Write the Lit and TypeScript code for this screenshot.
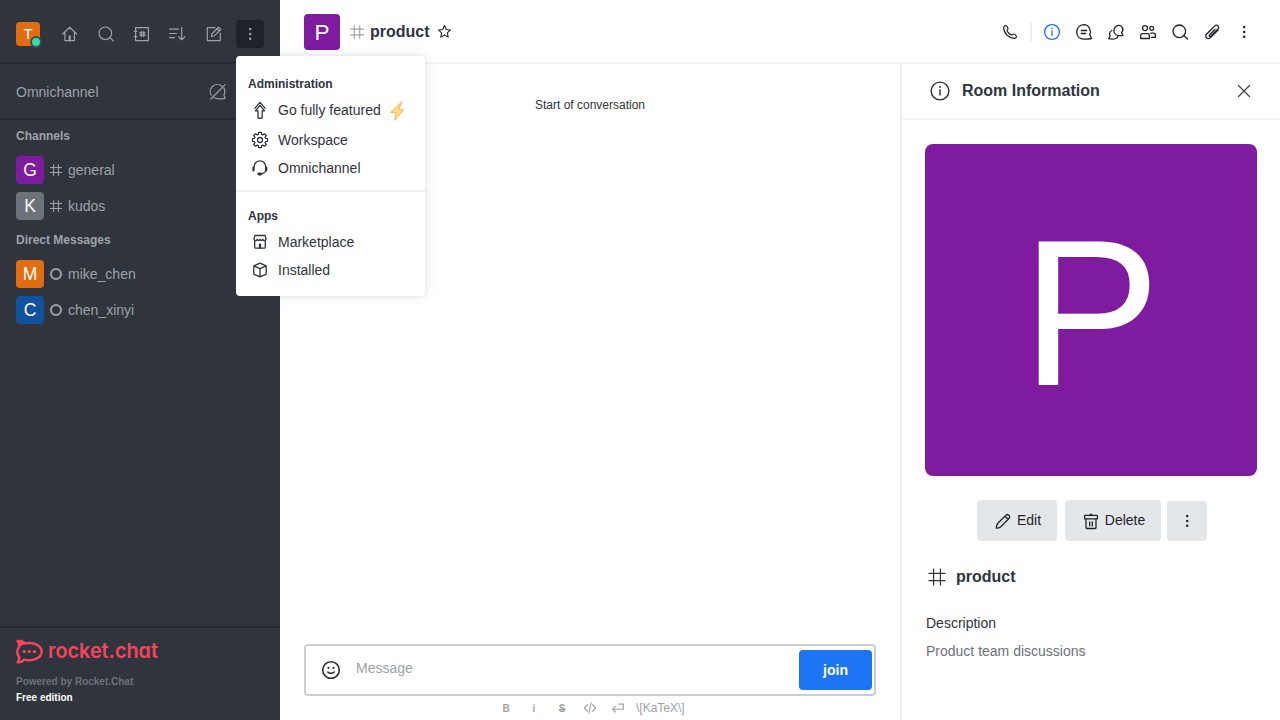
import { LitElement, html, css, svg, TemplateResult } from "lit";
import { customElement, property } from "lit/decorators.js";

const dots = svg`<g fill="currentColor" stroke="none"><circle cx="10.2" cy="5" r="1.25"/><circle cx="10.2" cy="9.900" r="1.25"/><circle cx="10.2" cy="14.800" r="1.25"/></g>`;

// Outline of a gear with eight teeth, centred in the 20x20 icon box.
const gearPath = () => {
  const pts: string[] = [];
  for (let i = 0; i < 8; i++) {
    for (const [deg, r] of [[-16, 5.8], [-11, 7.7], [11, 7.7], [16, 5.8]]) {
      const a = ((i * 45 + deg) * Math.PI) / 180;
      pts.push(`${(10 + r * Math.cos(a)).toFixed(2)} ${(10 + r * Math.sin(a)).toFixed(2)}`);
    }
  }
  return `M${pts.join("L")}Z`;
};

const icons: Record<string, TemplateResult> = {
  home: svg`<path d="M2.7 10 9.7 3.2l7 6.8M4.9 8.6v8h9.5v-8"/><path d="M9.7 16.400v-4" stroke-width="2.2"/>`,
  search: svg`<circle cx="9.3" cy="9.3" r="6.3"/><path d="m13.8 13.6 3.7 3.4"/>`,
  directory: svg`<path d="M3.600 3.600h12.800v13H3.600zM2.400 7.400h2.400M2.400 12.700h2.400M9.300 7.400v5.200M11.700 7.400v5.200M7.700 8.800h5.500M7.700 11.200h5.500"/>`,
  sort: svg`<path d="M1.600 5.200h9M1.600 9.500h7.100M1.600 13.700h5.100M13.700 3.300v12.400M10.500 12.700l3.200 3.100 3.200-3.100"/>`,
  edit: svg`<path d="M11 3.600H3.300v13h13V9.200M7.400 12.500l.5-2.800 6.600-6.400 2.300 2.200-6.600 6.400zM13 4.800l2.300 2.200"/>`,
  kebab: dots,
  omnioff: svg`<path d="M3.300 13.200A7.100 7.100 0 0 1 13.800 4M15.900 6.100c1.300 2.300 1.200 4.900 0 7.100l1.200 3.100c-3.500.6-8.200 1-11-.5M2.800 17 17.200 2.600"/>`,
  hash: svg`<path d="M6.600 2v16M13.400 2v16M2 6.400h16M2 13.600h16"/>`,
  star: svg`<path d="m10 3 2.100 4.600 4.900.6-3.600 3.400.9 5-4.300-2.500-4.300 2.500.9-5L3 8.200l4.900-.6z"/>`,
  phone: svg`<path d="M3.700 5.600C3.700 4.300 5 3.200 6 3.700c1 .5 1.900 1.900 2 2.900.1.900-1.200 1.100-1 2 .4 1.500 2.900 4 4.400 4.400.9.2 1.100-1.100 2-1 1 .1 2.500 1 2.900 2 .5 1-.6 2.300-1.800 2.300C8.900 16.300 3.700 11.300 3.700 5.600Z"/>`,
  info: svg`<circle cx="10" cy="10" r="7.400"/><path d="M10 9v4.400"/><circle cx="10" cy="6.600" r=".8" fill="currentColor" stroke="none"/>`,
  threads: svg`<path d="M15.800 12.800c1.600-3.200 0-10.100-6.200-10.100a7.100 7.100 0 0 0-6.900 7.200c0 4.600 3.200 7.100 7.200 7.300 2.600.1 5.300-.2 7.600-.7z"/><path d="M7.300 8.500h5.400M7.300 11.500h4.300"/>`,
  discussion: svg`<path d="M15.600 10.500l1.300 2.900c-1.700.3-4.800.5-6.900-.7-2.900-1.800-2.800-6.200-.2-8.300 2.100-1.700 5-1.300 6.400.9 1.100 1.700.8 3.700-.6 5.200Z"/><path d="M5.800 8.500c-2 1-2.900 3.400-1.600 5.500l-1.600 2.700c2.400.4 5.200.6 7.300-.2 1.200-.4 2-1.300 2.400-2.800"/>`,
  team: svg`<circle cx="7" cy="6.100" r="2.500"/><circle cx="13.700" cy="6.300" r="1.900"/><path d="M2.700 16.500v-3.200c0-1 .8-1.700 1.700-1.700h5.300c1 0 1.700.8 1.700 1.700v3.200zM12.800 11.200h2.500c1.200 0 2.200.9 2.200 2.100v2.100h-3.800"/>`,
  clip: svg`<path d="m12.900 7.500-5.200 5.200c-1.200 1.200.1 2.500 1.300 1.300l6.700-6.700c2.500-2.500-.8-5.600-3.200-3.200l-7.600 7.600c-3.100 3.100.9 6.600 3.800 3.700l7.400-7.300M10.900 5.800 5.800 11"/>`,
  close: svg`<path d="m4.400 4.400 11.200 11.200M15.600 4.400 4.400 15.600"/>`,
  upgrade: svg`<path d="M8 17v-6.200H5.400L10 5.400l4.600 5.400H12.200V17c0 1.900-4.200 1.900-4.200 0ZM5 8.200 10 2.400l5 5.800"/>`,
  gear: svg`<path d=${gearPath()}/><circle cx="10" cy="10" r="2.500"/>`,
  headset: svg`<path d="M4.200 9V8.200a5.700 5.300 0 0 1 11.400 0V9c1.300 3.500-.6 6.300-4 6.800"/><path d="M3.500 9.500v3M16.200 9.500v3" stroke-width="2.200"/><path d="M8.700 16h1.900" stroke-width="2.800"/>`,
  market: svg`<path d="M4.700 8.500v6.800q0 .9.900.9h8.800q.9 0 .9-.9V8.500M5.400 3.500h9.200q.7 0 .8.800l.6 2.500c0 2.200-2.500 2.200-3.300.6-.8 1.500-1.900 1.500-2.700 0-.8 1.500-1.900 1.500-2.700 0-.8 1.600-3.300 1.600-3.300-.6l.6-2.500q.1-.8.800-.8Z"/><path d="M10 16v-3.500" stroke-width="2.200"/>`,
  cube: svg`<path d="m10 3.200 6.200 2.600v8.300L10 16.900l-6.200-2.800V5.800zM3.800 5.900 10 8.600l6.200-2.700M10 8.600v8.300"/>`,
  smile: svg`<circle cx="10" cy="10" r="6.900"/><path d="M7.300 11.700c1.300 1.500 4.100 1.500 5.400 0"/><g fill="currentColor" stroke="none"><circle cx="7.900" cy="8.200" r=".95"/><circle cx="12.100" cy="8.200" r=".95"/></g>`,
  code: svg`<path d="M6.500 5.300 1.900 10l4.600 4.700M13.500 5.300l4.600 4.700-4.600 4.700M11.600 2.500 8.400 17.500"/>`,
  enter: svg`<path d="M11 4.500h6.700v7.200H2.600M6.500 7.700l-4.200 4 4.200 4"/>`,
  pencil: svg`<path d="M3.300 17.200c0-2.500.2-3.500 1.300-4.700l8.400-8.400c1.800-1.700 4.900 1.400 3.200 3.100l-8.400 8.500c-1.200 1.100-2.100 1.400-4.500 1.500ZM12 5.200l3.100 3.100"/>`,
  trash: svg`<path d="M4.200 4.400h11.600q.6 0 .6.600v2.800H3.600V5q0-.6.600-.6ZM5 7.800v8.700q0 1 1 1h8q1 0 1-1V7.800M8.700 11v3.900M11.300 11v3.900M9.300 3.300h1.400"/>`,
};

@customElement("rc-icon")
class RcIcon extends LitElement {
  static styles = css`
    :host { display: inline-flex; flex: none; }
    svg { display: block; fill: none; stroke: currentColor; stroke-linecap: round; stroke-linejoin: round; }
  `;
  @property() name = "";
  @property({ type: Number }) size = 20;
  @property({ type: Number }) weight = 1.2;
  render() {
    return html`<svg width=${this.size} height=${this.size} viewBox="0 0 20 20" stroke-width=${this.weight}>${icons[this.name]}</svg>`;
  }
}

@customElement("rc-avatar")
class RcAvatar extends LitElement {
  static styles = css`
    :host { display: block; flex: none; }
    svg { display: block; border-radius: 4px; }
    .large { border-radius: 8px; }
    text { font-family: "Liberation Sans", Arial, sans-serif; font-size: 125px; fill: #fff; text-anchor: middle; }
  `;
  @property() letter = "";
  @property() color = "";
  @property({ type: Number }) size = 28;
  render() {
    return html`<svg class=${this.size > 100 ? "large" : ""} width=${this.size} height=${this.size} viewBox="0 0 200 200">
      <rect width="200" height="200" fill=${this.color}></rect><text x="100" y="100" dy="0.36em">${this.letter}</text></svg>`;
  }
}

const channels = [["G", "#7f1b9f", "general"], ["K", "#6c727a", "kudos"]];
const directs = [["M", "#e26d0e", "mike_chen"], ["C", "#10529e", "chen_xinyi"]];

@customElement("app-root")
class AppRoot extends LitElement {
  static styles = css`
    :host { display: flex; position: relative; width: 1280px; height: 720px; overflow: hidden; background: #fff; color: #2f343d; font: 14px/20px "Liberation Sans", Arial, sans-serif; }
    * { box-sizing: border-box; }
    .side { width: 280px; flex: none; display: flex; flex-direction: column; background: #2f343d; color: #9ea2a8; }
    .tools { height: 64px; padding: 20px 16px 0; display: flex; gap: 8px; border-bottom: 2px solid #272b33; }
    .me { position: relative; width: 28px; margin-right: 4px; padding-top: 2px; }
    .presence { position: absolute; left: 14px; top: 16px; width: 12px; height: 12px; border-radius: 50%; background: #2de0a5; border: 2px solid #414852; }
    .tool { width: 28px; height: 28px; display: grid; place-items: center; border-radius: 4px; }
    .pressed { background: #1f2329; }
    .omni { height: 56px; padding: 2px 52px 0 16px; display: flex; align-items: center; justify-content: space-between; border-bottom: 2px solid #272b33; }
    .list { flex: 1; }
    .group { height: 32px; padding-left: 16px; font-size: 12px; font-weight: 700; line-height: 32px; }
    .room { height: 36px; padding-left: 16px; display: flex; align-items: center; }
    .mark { width: 24px; display: grid; place-items: center; }
    .ring { width: 12px; height: 12px; border: 2px solid #9ea2a8; border-radius: 50%; }
    .foot { height: 94px; border-top: 2px solid #272b33; padding: 5px 16px 0; font-size: 12px; line-height: 16px; font-weight: 700; }
    .brand { display: block; margin-bottom: 9px; }
    .brand text { font: 600 20.5px Inter, sans-serif; font-feature-settings: "cv11" 1; fill: #f5455c; }
    .dim { font-size: 10px; color: #6c727a; }
    .edition { font-size: 10px; color: #fff; }
    .page { flex: 1; min-width: 0; display: flex; flex-direction: column; }
    .head { height: 64px; padding: 2px 24px 0; border-bottom: 2px solid #f2f3f5; display: flex; align-items: center; }
    .title { font-size: 16px; line-height: 24px; font-weight: 700; }
    .hashy { margin: 0 5px 0 9px; color: #9ea2a8; }
    .fav { margin: -1px 0 0 6px; color: #1f2329; }
    .acts { margin-left: auto; display: flex; align-items: center; gap: 8px; color: #1f2329; }
    .act { width: 24px; display: grid; place-items: center; }
    .on { color: #1d74f5; }
    .rule { width: 2px; height: 20px; background: #eeeff1; }
    .body { flex: 1; display: flex; min-height: 0; }
    .chat { flex: 1; display: flex; flex-direction: column; padding: 0 24px; }
    .start { flex: 1; padding-top: 33px; text-align: center; font-size: 12px; line-height: 16px; }
    .composer { height: 52px; border: 2px solid #cbced1; border-radius: 4px; display: flex; align-items: center; padding: 0 2px 0 13px; }
    .hint { flex: 1; margin: 0 0 4px 13px; color: #9ea2a8; }
    .join { width: 73px; height: 40px; background: #1d74f5; color: #fff; border-radius: 4px; font-weight: 700; display: grid; place-items: center; }
    .format { height: 24px; display: flex; align-items: center; padding-left: 188px; color: #9ea2a8; font-size: 12px; }
    .cell { width: 28px; display: grid; place-items: center; }
    .glyph { font-size: 10px; font-weight: 700; padding-top: 2px; }
    .struck { text-decoration: line-through; }
    .katex { margin-left: 4px; }
    .panel { width: 380px; border-left: 2px solid #eeeff1; display: flex; flex-direction: column; }
    .phead { height: 56px; padding: 0 26px; border-bottom: 2px solid #f2f3f5; display: flex; align-items: center; }
    .ptitle { flex: 1; margin-left: 10px; }
    .pbody { padding: 24px 23px 0; }
    .buttons { display: flex; align-items: flex-end; padding: 24px 0 0 52px; }
    .btn { height: 41px; background: #e4e7ea; color: #1f2329; border-radius: 4px; display: flex; align-items: center; justify-content: center; gap: 4px; }
    .cap { padding-bottom: 1px; }
    .wide1 { width: 80px; margin-right: 8px; }
    .wide2 { width: 96px; margin-right: 6px; }
    .square { width: 40px; height: 40px; }
    .name { display: flex; align-items: center; gap: 9px; padding: 24px 0 0 2px; }
    .label { padding: 24px 0 0 1px; }
    .desc { padding: 8px 0 0 1px; color: #6c727a; }
    .menu { position: absolute; left: 236px; top: 56px; width: 189px; height: 240px; padding: 12px 0; border-radius: 4px; background: #fff; box-shadow: 0 0 2px rgba(47,52,61,.1), 0 0 12px rgba(47,52,61,.14); }
    .mtitle { padding: 8px 12px 4px; font-size: 12px; line-height: 16px; font-weight: 700; }
    .item { height: 28px; padding: 4px 14px; display: flex; gap: 8px; }
    .tall { height: 30px; }
    .sep { height: 2px; background: #eeeff1; margin: 8px 0; }
    .bolt { margin: -1px 0 0 -2px; }
  `;

  room(r: string[], direct: boolean) {
    return html`<div class="room"><rc-avatar .letter=${r[0]} .color=${r[1]} .size=${28}></rc-avatar>
      <span class="mark">${direct ? html`<span class="ring"></span>` : html`<rc-icon name="hash" size="14" weight="1.500"></rc-icon>`}</span><span>${r[2]}</span></div>`;
  }

  item(icon: string, label: string) {
    return html`<div class="item"><rc-icon .name=${icon} weight="1.300"></rc-icon><span>${label}</span></div>`;
  }

  render() {
    return html`
      <aside class="side">
        <div class="tools">
          <div class="me"><rc-avatar letter="T" color="#e26d0e" size="24"></rc-avatar><span class="presence"></span></div>
          ${["home", "search", "directory", "sort", "edit", "kebab"].map((n) => html`<div class="tool ${n === "kebab" ? "pressed" : ""}"><rc-icon .name=${n}></rc-icon></div>`)}
        </div>
        <div class="omni"><span>Omnichannel</span><rc-icon name="omnioff"></rc-icon></div>
        <div class="list">
          <div class="group">Channels</div>
          ${channels.map((r) => this.room(r, false))}
          <div class="group">Direct Messages</div>
          ${directs.map((r) => this.room(r, true))}
        </div>
        <div class="foot">
          <svg class="brand" width="150" height="32" viewBox="0 -6 150 32">
            <path fill="none" stroke="#f5455c" stroke-width="2.500" stroke-linejoin="round" d="M1.600 2.300C4.300 2 6.700 2.900 8.200 4.600 16 2.800 25.700 5.600 25.700 12.600S16 22.300 8.300 20.600C6.700 22.700 4.300 23.500 1.600 23.300 3 21.700 3.600 19.800 3.100 17.900.7 15.200.7 10.600 3.100 7.700 3.700 5.800 3.100 3.900 1.600 2.300Z"/>
            <path fill="#f5455c" d="M.2 1.100C5 .1 8.600 1.500 10.600 4.400 7 5.300 4.500 6.700 3 9.200 4 6 3 3.500.2 1.100Z"/>
            <g fill="#f5455c"><circle cx="8.200" cy="12.600" r="1.700"/><circle cx="13.300" cy="12.600" r="1.700"/><circle cx="18.500" cy="12.600" r="1.700"/></g>
            <text x="32" y="18.500" textLength="110" lengthAdjust="spacingAndGlyphs">rocket.chat</text>
          </svg>
          <div class="dim">Powered by Rocket.Chat</div>
          <div class="edition">Free edition</div>
        </div>
      </aside>
      <main class="page">
        <header class="head">
          <rc-avatar letter="P" color="#7f1b9f" size="36"></rc-avatar>
          <rc-icon class="hashy" name="hash" size="16" weight="1.400"></rc-icon>
          <span class="title">product</span>
          <rc-icon class="fav" name="star" size="17" weight="1.300"></rc-icon>
          <div class="acts">
            <span class="act"><rc-icon name="phone"></rc-icon></span><span class="rule"></span>
            ${["info", "threads", "discussion", "team", "search", "clip", "kebab"].map((n) => html`<span class="act ${n === "info" ? "on" : ""}"><rc-icon .name=${n} weight="1.300"></rc-icon></span>`)}
          </div>
        </header>
        <div class="body">
          <section class="chat">
            <div class="start">Start of conversation</div>
            <div class="composer"><rc-icon name="smile" size="24" weight="1.400"></rc-icon><span class="hint">Message</span><span class="join">join</span></div>
            <div class="format">
              <span class="cell glyph">B</span><span class="cell glyph">i</span><span class="cell glyph struck">S</span>
              <span class="cell"><rc-icon name="code" size="14" weight="1.600"></rc-icon></span>
              <span class="cell"><rc-icon name="enter" size="14" weight="1.600"></rc-icon></span>
              <span class="katex">\\[KaTeX\\]</span>
            </div>
          </section>
          <aside class="panel">
            <div class="phead"><rc-icon name="info" size="24" weight="1.200"></rc-icon><span class="title ptitle">Room Information</span><rc-icon name="close" weight="1.300"></rc-icon></div>
            <div class="pbody">
              <rc-avatar letter="P" color="#7f1b9f" size="332"></rc-avatar>
              <div class="buttons">
                <span class="btn wide1"><rc-icon name="pencil" weight="1.300"></rc-icon><span class="cap">Edit</span></span>
                <span class="btn wide2"><rc-icon name="trash" weight="1.300"></rc-icon><span class="cap">Delete</span></span>
                <span class="btn square"><rc-icon name="kebab"></rc-icon></span>
              </div>
              <div class="name"><rc-icon name="hash" weight="1.200"></rc-icon><span class="title">product</span></div>
              <div class="label">Description</div>
              <div class="desc">Product team discussions</div>
            </div>
          </aside>
        </div>
      </main>
      <nav class="menu">
        <div class="mtitle">Administration</div>
        <div class="item tall"><rc-icon name="upgrade" weight="1.300"></rc-icon><span>Go fully featured</span>
          <svg class="bolt" width="20" height="24" viewBox="0 0 20 24"><path d="m14.800 3-11 10.400 5.500.2L7.600 21 16.500 10.700l-4.800-.4z" fill="#ffe08f" stroke="#fbbf58" stroke-width="1.200" stroke-linejoin="round"/></svg></div>
        ${this.item("gear", "Workspace")}${this.item("headset", "Omnichannel")}
        <div class="sep"></div>
        <div class="mtitle">Apps</div>
        ${this.item("market", "Marketplace")}${this.item("cube", "Installed")}
      </nav>`;
  }
}
